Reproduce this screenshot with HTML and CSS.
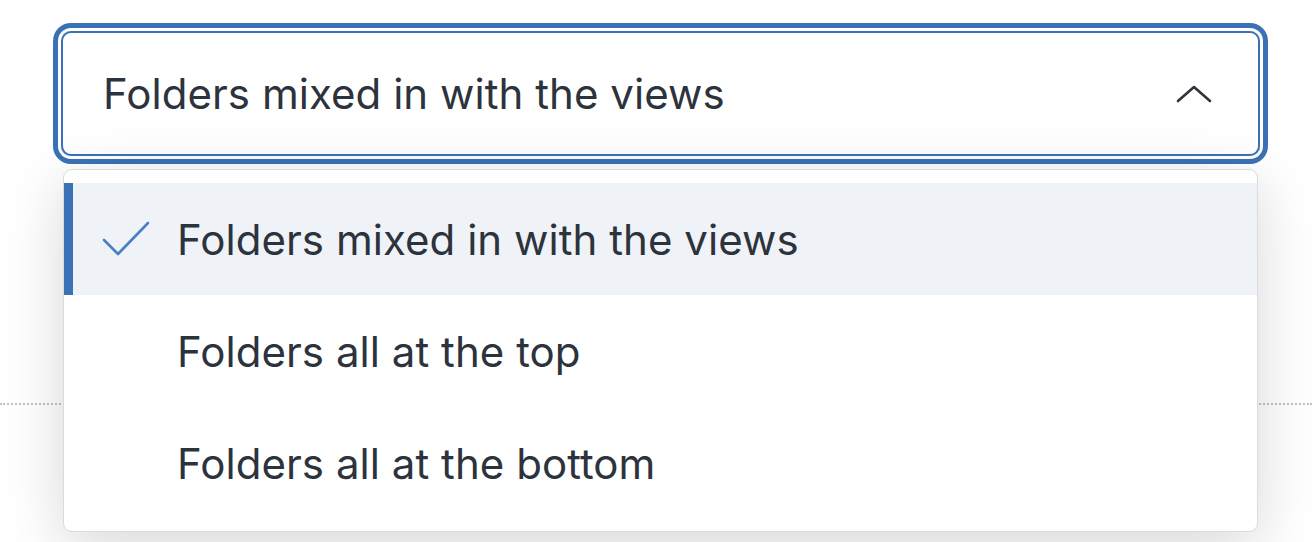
FILE: index.html
```html
<!DOCTYPE html>
<html>
<head>
<meta charset="utf-8">
<link rel="stylesheet" href="styles.css">
</head>
<body>
<div class="page">
  <div class="select">
    <span class="select-value">Folders mixed in with the views</span>
    <svg class="chevron" width="36" height="20" viewBox="0 0 36 20"><path d="M2 17 L18 3 L34 17" fill="none" stroke="#30353c" stroke-width="2.6" stroke-linecap="round" stroke-linejoin="round"/></svg>
  </div>
  <div class="divider"></div>
  <ul class="menu">
    <li class="option selected">
      <svg class="check" width="48" height="36" viewBox="0 0 48 36"><path d="M2 20 L16 34 L46 3" fill="none" stroke="#4a7fc1" stroke-width="2.6" stroke-linecap="round" stroke-linejoin="round"/></svg>
      <span>Folders mixed in with the views</span>
    </li>
    <li class="option"><span>Folders all at the top</span></li>
    <li class="option"><span>Folders all at the bottom</span></li>
  </ul>
</div>
</body>
</html>
```

FILE: styles.css
```css
html, body {
  margin: 0;
  padding: 0;
  background: #ffffff;
  width: 1312px;
  height: 542px;
  overflow: hidden;
}
.page {
  position: relative;
  font-family: Inter, "Liberation Sans", sans-serif;
  color: #2c333c;
  padding-top: 31px;
}
.select {
  box-sizing: border-box;
  margin-left: 61px;
  width: 1199px;
  height: 125px;
  border: 2px solid #3b72b6;
  border-radius: 10px;
  box-shadow: 0 0 0 3px #ffffff, 0 0 0 8px #3b72b6;
  display: flex;
  align-items: center;
  justify-content: space-between;
  padding: 0 46px 0 40px;
}
.select-value {
  font-size: 42px;
  letter-spacing: 0.05px;
  line-height: 1;
}
.chevron {
  display: block;
}
.divider {
  margin-top: 247px;
  border-top: 2px dotted #bfc2c6;
  height: 0;
}
.menu {
  position: absolute;
  left: 63px;
  top: 169px;
  width: 1195px;
  box-sizing: border-box;
  margin: 0;
  padding: 13px 0 12px;
  list-style: none;
  background: #ffffff;
  border: 1px solid #d8dbdf;
  border-radius: 9px;
  box-shadow: 0 14px 60px rgba(0, 0, 0, 0.16);
}
.option {
  height: 112px;
  display: flex;
  align-items: center;
  padding-left: 113px;
  font-size: 42px;
  letter-spacing: 0.05px;
  position: relative;
}
.option.selected {
  background: #eff2f7;
}
.option.selected::before {
  content: "";
  position: absolute;
  left: 0;
  top: 0;
  bottom: 0;
  width: 9px;
  background: #3b72b6;
}
.check {
  position: absolute;
  left: 38px;
  top: 37px;
}
```
